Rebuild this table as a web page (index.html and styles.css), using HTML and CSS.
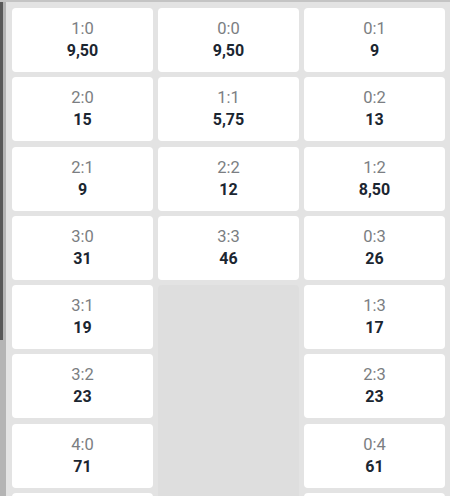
FILE: index.html
```html
<!DOCTYPE html>
<html>
<head>
<meta charset="utf-8">
<link rel="stylesheet" href="styles.css">
</head>
<body>
<div class="frame">
  <div class="side"><div class="side-thumb"></div></div>
  <div class="main">
    <div class="grid">
      <div class="cell"><span class="score">1:0</span><span class="odds">9,50</span></div>
      <div class="cell"><span class="score">0:0</span><span class="odds">9,50</span></div>
      <div class="cell"><span class="score">0:1</span><span class="odds">9</span></div>

      <div class="cell"><span class="score">2:0</span><span class="odds">15</span></div>
      <div class="cell"><span class="score">1:1</span><span class="odds">5,75</span></div>
      <div class="cell"><span class="score">0:2</span><span class="odds">13</span></div>

      <div class="cell"><span class="score">2:1</span><span class="odds">9</span></div>
      <div class="cell"><span class="score">2:2</span><span class="odds">12</span></div>
      <div class="cell"><span class="score">1:2</span><span class="odds">8,50</span></div>

      <div class="cell"><span class="score">3:0</span><span class="odds">31</span></div>
      <div class="cell"><span class="score">3:3</span><span class="odds">46</span></div>
      <div class="cell"><span class="score">0:3</span><span class="odds">26</span></div>

      <div class="cell"><span class="score">3:1</span><span class="odds">19</span></div>
      <div class="cell empty"></div>
      <div class="cell"><span class="score">1:3</span><span class="odds">17</span></div>

      <div class="cell"><span class="score">3:2</span><span class="odds">23</span></div>
      <div class="cell"><span class="score">2:3</span><span class="odds">23</span></div>

      <div class="cell"><span class="score">4:0</span><span class="odds">71</span></div>
      <div class="cell"><span class="score">0:4</span><span class="odds">61</span></div>

      <div class="cell"></div>
      <div class="cell"></div>
    </div>
  </div>
</div>
</body>
</html>
```
FILE: styles.css
```css
html, body {
  margin: 0;
  padding: 0;
  width: 450px;
  height: 496px;
  overflow: hidden;
  background: #e3e3e3;
  font-family: Roboto, "Liberation Sans", sans-serif;
}

.frame {
  display: flex;
  height: 496px;
  border-top: 2px solid #c4c4c4;
  box-sizing: border-box;
  overflow: hidden;
}

.side {
  width: 6px;
  flex: none;
  display: flex;
  background: #b4b4b4;
}

.side-thumb {
  width: 3px;
  height: 338px;
  background: #585858;
}

.main {
  flex: 1;
  padding: 6px 5px 0 6px;
}

.grid {
  display: grid;
  grid-template-columns: repeat(3, 141px);
  grid-auto-rows: 64px;
  column-gap: 5px;
  row-gap: 5.3px;
}

.cell {
  background: #ffffff;
  border-radius: 4px;
  display: flex;
  flex-direction: column;
  align-items: center;
  justify-content: center;
}

.cell.empty {
  grid-column: 2;
  grid-row: 5 / span 4;
  background: #dedede;
}

.score {
  font-size: 16.5px;
  line-height: 22px;
  color: #7b7e82;
}

.odds {
  font-size: 16px;
  line-height: 22px;
  font-weight: 700;
  color: #1b2631;
}
```
